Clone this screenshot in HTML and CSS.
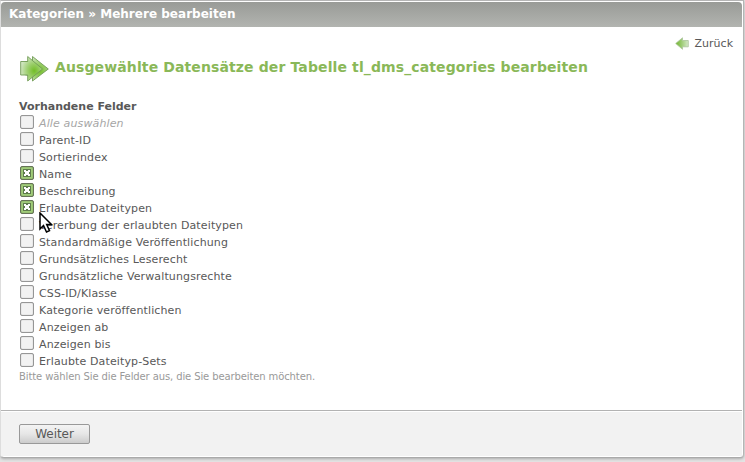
FILE: index.html
```
<!DOCTYPE html>
<html lang="de">
<head>
<meta charset="utf-8">
<title>Mehrere bearbeiten</title>
<link rel="stylesheet" href="styles.css">
</head>
<body>
<main class="panel">
  <h1 class="bar">Kategorien » Mehrere bearbeiten</h1>
  <div class="content">
    <a class="back"><svg width="14" height="13" viewBox="0 0 14 13"><defs><linearGradient id="b"><stop offset="0" stop-color="#72b52c"/><stop offset=".45" stop-color="#9bcb72"/><stop offset="1" stop-color="#d5e8c9"/></linearGradient></defs><path d="M.7 6.5 7.5.8v2.7h5.8v6.3H7.5v2.5Z" fill="url(#b)" stroke="#a9c49a" stroke-width=".8"/></svg><span>Zurück</span></a>
    <h2 class="title"><svg width="30" height="28" viewBox="0 0 30 28"><defs><radialGradient id="g" cx=".62" cy=".58" r=".65"><stop offset="0" stop-color="#72bd27"/><stop offset=".45" stop-color="#9bce6b"/><stop offset="1" stop-color="#d3e7c6"/></radialGradient></defs><g fill="url(#g)" stroke="#709b55" stroke-width=".9"><path d="M6.5 7.5H13.5V2.5L29.3 15 13.5 27V21H6.5Z"/><path d="M1.7 7.5H8.7V2.5L23.5 15 8.7 27V21H1.7Z"/></g></svg><span>Ausgewählte Datensätze der Tabelle tl_dms_categories bearbeiten</span></h2>
    <fieldset class="fields">
      <legend>Vorhandene Felder</legend>
      <label class="all"><i></i><span>Alle auswählen</span></label>
      <label><i></i><span>Parent-ID</span></label>
      <label><i></i><span>Sortierindex</span></label>
      <label><i class="on"><svg viewBox="0 0 6 6"><path d="M0 0H2V1H4V0H6V2H5V4H6V6H4V5H2V6H0V4H1V2H0Z"/></svg></i><span>Name</span></label>
      <label><i class="on"><svg viewBox="0 0 6 6"><path d="M0 0H2V1H4V0H6V2H5V4H6V6H4V5H2V6H0V4H1V2H0Z"/></svg></i><span>Beschreibung</span></label>
      <label><i class="on"><svg viewBox="0 0 6 6"><path d="M0 0H2V1H4V0H6V2H5V4H6V6H4V5H2V6H0V4H1V2H0Z"/></svg></i><span>Erlaubte Dateitypen</span></label>
      <label><i></i><span>Vererbung der erlaubten Dateitypen</span></label>
      <label><i></i><span>Standardmäßige Veröffentlichung</span></label>
      <label><i></i><span>Grundsätzliches Leserecht</span></label>
      <label><i></i><span>Grundsätzliche Verwaltungsrechte</span></label>
      <label><i></i><span>CSS-ID/Klasse</span></label>
      <label><i></i><span>Kategorie veröffentlichen</span></label>
      <label><i></i><span>Anzeigen ab</span></label>
      <label><i></i><span>Anzeigen bis</span></label>
      <label><i></i><span>Erlaubte Dateityp-Sets</span></label>
      <p class="hint">Bitte wählen Sie die Felder aus, die Sie bearbeiten möchten.</p>
    </fieldset>
  </div>
  <footer class="footer"><button>Weiter</button></footer>
</main>
<svg class="cursor" width="14" height="22" viewBox="0 0 14 22"><path d="M1 1V17L4.5 13.5 7.5 20 10.5 18.7 7.7 12.5H12.5Z" fill="#fff" stroke="#000" stroke-width="1.5"/></svg>
</body>
</html>
```
FILE: styles.css
```
* { box-sizing: border-box; }
body { margin: 0; height: 462px; overflow: hidden; background: #e4e4e4; color: #585858; font: 11px/17px "DejaVu Sans", sans-serif; }
.panel { width: 744px; height: 458px; border: 1px solid #b5b5b5; border-left-color: #ddd; border-bottom-color: #aaa; border-radius: 0 0 4px 4px; background: #fff; padding: 1px 1px 1px 0; box-shadow: 0 1px 3px #aaa; display: flex; flex-direction: column; }
.bar { flex: none; height: 25px; margin: 0; padding-left: 8px; border-radius: 4px 4px 0 0; background: linear-gradient(#999b97, #b2b4b0); color: #fff; font-size: 12px; line-height: 24px; letter-spacing: .02px; }
.content { height: 384px; flex: none; border-bottom: 1px solid #b3b3b3; padding: 8px 9px 0 18px; display: flex; flex-direction: column; }
.back { align-self: flex-end; height: 17px; display: flex; align-items: center; gap: 6px; }
.title { height: 28px; margin: 2px 0 0; display: flex; align-items: center; gap: 6px; color: #8ab858; font-size: 14px; line-height: 24px; letter-spacing: .115px; }
.title span { padding-bottom: 3px; }
.fields { border: 0; margin: 16px 0 0; padding: 0; }
.fields legend { padding: 0; font-weight: bold; height: 17px; }
.fields label { display: flex; align-items: flex-start; gap: 5px; height: 17px; letter-spacing: .13px; }
.fields label span { line-height: 17px; }
.fields i { width: 14px; height: 14px; margin-left: 1px; border: 1px solid #969696; border-radius: 2px; background: #f2f2f2; box-shadow: inset 0 0 1px #999; }
.fields i.on { background: #a1cc7a; border-color: #667357; padding: 2px; display: flex; box-shadow: inset 0 0 1px #4c653b; }
.fields i svg { width: 8px; height: 8px; padding: 1px; background: #5f7d4d; fill: #fff; }
.all span { font-style: italic; color: #a6a6a6; }
.hint { margin: 0; color: #999; font-size: 10px; line-height: 13px; letter-spacing: -.11px; }
.footer { flex: 1; margin-top: 1px; padding: 12px 18px; background: #f2f2f2; }
.footer button { display: block; width: 71px; height: 20px; padding: 0; border: 1px solid #999; border-radius: 2px; background: linear-gradient(#f4f4f4, #e6e6e6 50%, #ccc); color: #585858; font: 12px/18px "DejaVu Sans", sans-serif; letter-spacing: -.05px; }
.cursor { position: absolute; left: 39px; top: 212px; }
```
